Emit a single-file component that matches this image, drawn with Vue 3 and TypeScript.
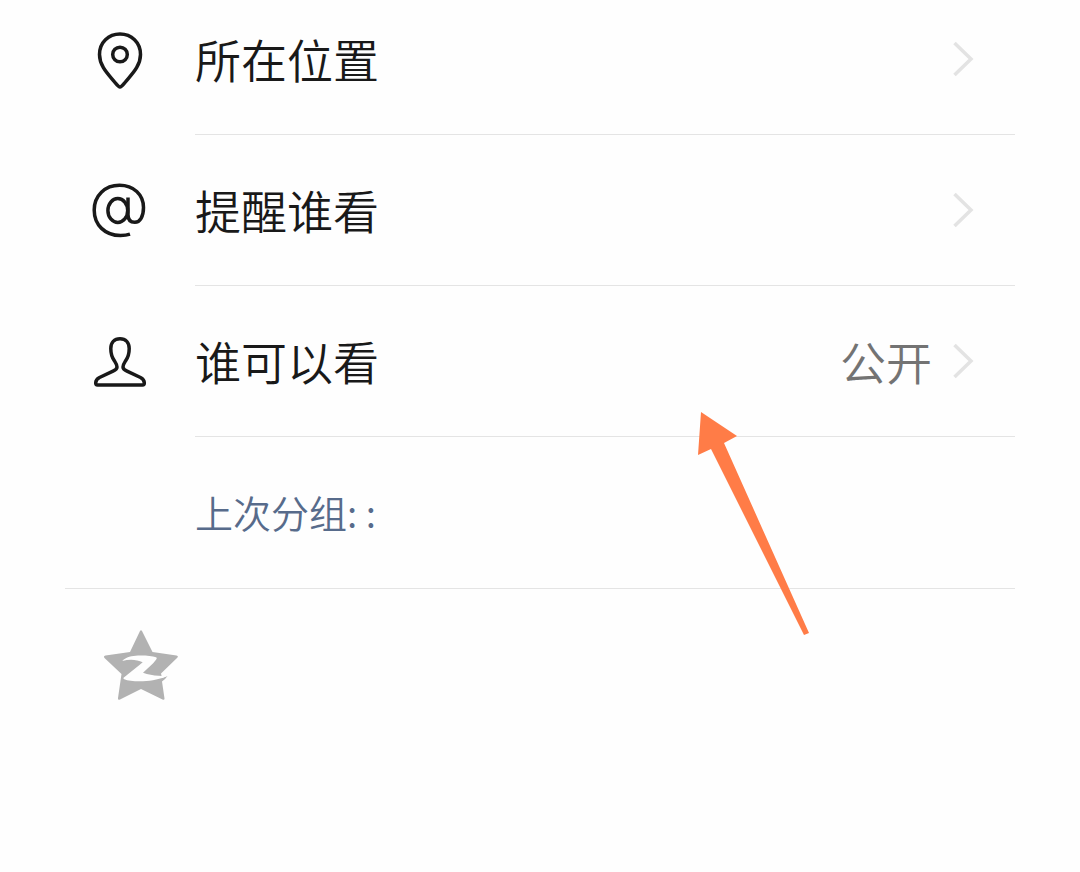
<script setup lang="ts">
interface Option {
  id: 'location' | 'mention' | 'audience'
  label: string
  value?: string
}

const options: Option[] = [
  { id: 'location', label: '所在位置' },
  { id: 'mention', label: '提醒谁看' },
  { id: 'audience', label: '谁可以看', value: '公开' },
]
</script>

<template>
  <main class="page">
    <section class="options">
      <button v-for="option in options" :key="option.id" type="button" class="row">
        <svg v-if="option.id === 'location'" class="icon" viewBox="10 11 60 60" aria-hidden="true">
          <path d="M40 67C38.500 67 37 65 35 62.500C28 54 19.500 46 19.500 34.500C19.500 22.500 28.500 14 40 14C51.500 14 60.500 22.500 60.500 34.500C60.500 46 52 54 45 62.500C43 65 41.500 67 40 67Z" />
          <circle cx="40" cy="34.500" r="7.300" />
        </svg>
        <svg v-else-if="option.id === 'mention'" class="icon" viewBox="10 12 60 60" aria-hidden="true">
          <path d="M50 64.200C47 65.200 44 65.500 40.500 65.500C25 65.500 14.200 55 14.200 40C14.200 25.500 25 15.200 39.500 15.200C53.500 15.200 63.500 24.500 63.500 37.500C63.500 46.500 60 52.300 54.800 52.300C50.500 52.300 48 49.500 48 44.500V27.500" />
          <ellipse cx="37.800" cy="40.500" rx="9.900" ry="12" />
        </svg>
        <svg v-else class="icon" viewBox="10 8 60 60" aria-hidden="true">
          <path d="M37 42C37 39.500 35.800 38 34.200 35.500C31.800 32 30.800 28.500 30.800 23.500C30.800 17.500 34.300 13.800 40 13.800C45.700 13.800 49.200 17.500 49.200 23.500C49.200 28.500 48.200 32 45.800 35.500C44.200 38 43 39.500 43 42C43 44 44.500 45 47 46.200L60.500 52.500C63.500 54 64.300 55.500 64.300 58C64.300 59.500 63.800 60 62.500 60H17.500C16.200 60 15.700 59.500 15.700 58C15.700 55.500 16.500 54 19.500 52.500L33 46.200C35.500 45 37 44 37 42Z" />
        </svg>
        <span class="body">
          <span class="label">{{ option.label }}</span>
          <span v-if="option.value" class="value">{{ option.value }}</span>
          <svg class="chevron" viewBox="0 0 22 40" aria-hidden="true">
            <path d="M2.500 5L19 21L2.500 37" />
          </svg>
        </span>
      </button>
      <a href="#" class="last-group">上次分组: :</a>
    </section>

    <button type="button" class="share" aria-label="QQ空间">
      <svg class="star" viewBox="0 0 80 76" aria-hidden="true">
        <path class="star-shape" d="M40 1Q41 -0.500 42 1L52.500 22L76.500 25.500Q79 26 77 28L61 43.500L62 48L67.500 46Q65.500 49 62 51.500L64.500 68.500Q64.500 70.500 62.500 69.500L41 59L20 69.500Q17.700 70.500 18 68L21.500 44L4.500 28Q3 26 5.500 25.500L30 22Z" />
        <path class="star-mark" d="M22.300 31C26 27 32 25.700 38 25.500C45 25.300 52 25.800 56 27.200C57.200 27.700 56.800 28.800 56 29.800C53 34 48 38 43 42.800C48 44.600 54 45.800 59 45.700C62 46 65 46 67.500 45.800C61 49 52 51 43 51.300C35 51.500 28 51 24.300 49.300C23 48.600 23.300 47.800 24.500 47C30 42.500 37 37.500 42.700 32.300C37 29.500 29.500 29 22.300 31Z" />
      </svg>
    </button>

    <svg class="pointer" viewBox="0 0 112 224" aria-hidden="true">
      <path d="M4 0L40 24L27 31L112 221L107 223L14 37L1 43Z" />
    </svg>
  </main>
</template>

<style>
body {
  margin: 0;
  background: #fefefe;
}
</style>

<style scoped>
.page {
  position: relative;
  min-height: 100vh;
  box-sizing: border-box;
  padding: 0 65px;
  font-family: "Noto Sans CJK SC", sans-serif;
  font-weight: 350;
}

.options {
  display: flex;
  flex-direction: column;
  border-bottom: 1px solid #e4e4e4;
}

.row {
  display: flex;
  gap: 45px;
  padding: 40px 0 0 25px;
  border: 0;
  background: none;
  color: #191919;
  font: inherit;
  font-size: 46px;
  line-height: 68px;
  text-align: left;
  cursor: pointer;
}

.row:first-child {
  padding-top: 24px;
}

.icon {
  flex: none;
  width: 60px;
  height: 60px;
  margin-top: 7px;
  fill: none;
  stroke: #191919;
  stroke-width: 3.5;
  stroke-linejoin: round;
}

.body {
  display: flex;
  flex: 1;
  align-items: center;
  padding: 0 41px 42px 0;
  border-bottom: 1px solid #e4e4e4;
}

.label {
  flex: 1;
}

.value {
  margin-right: 20px;
  color: #737373;
}

.chevron {
  width: 22px;
  height: 40px;
  fill: none;
  stroke: #e3e3e3;
  stroke-width: 3.5;
}

.last-group {
  padding: 41px 0 42px 130px;
  color: #576b8b;
  font-size: 38px;
  line-height: 68px;
  text-decoration: none;
}

.share {
  display: block;
  margin: 41px 0 0 35px;
  padding: 0;
  border: 0;
  background: none;
  cursor: pointer;
}

.star {
  display: block;
  width: 80px;
  height: 76px;
}

.star-shape {
  fill: #b2b2b2;
}

.star-mark {
  fill: #fefefe;
}

.pointer {
  position: absolute;
  top: 412px;
  left: 697px;
  width: 112px;
  height: 224px;
  fill: #ff7c47;
  pointer-events: none;
}
</style>
